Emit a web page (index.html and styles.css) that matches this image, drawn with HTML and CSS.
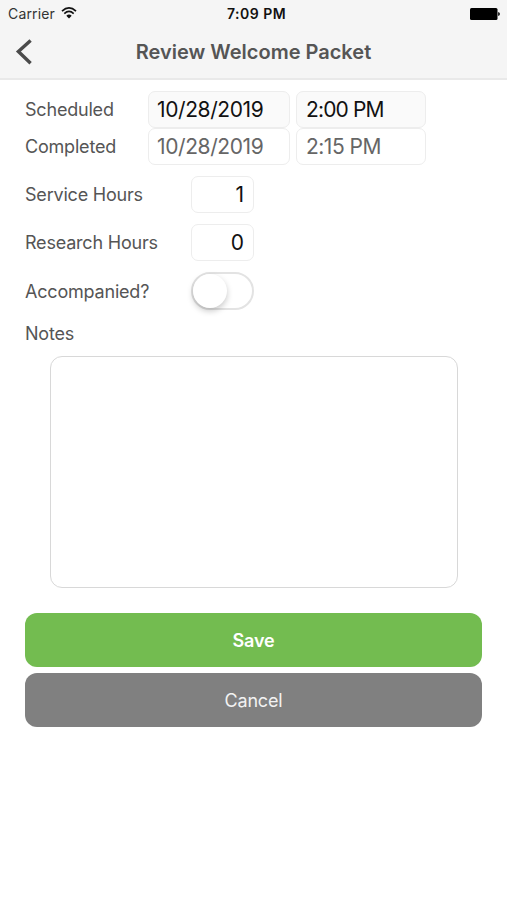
FILE: index.html
```html
<!DOCTYPE html>
<html lang="en">
<head>
<meta charset="utf-8">
<title>Review Welcome Packet</title>
<link rel="stylesheet" href="styles.css">
</head>
<body>
<header class="top">
  <div class="status">
    <div class="carrier"><span>Carrier</span>
      <svg class="wifi" viewBox="0 0 16 12" width="16" height="12" fill="none" stroke="#111" stroke-width="1.7"><path d="M1 4.1Q8-2.2 15 4.1M3.3 6.6Q8 2.3 12.7 6.6"/><path d="M5.3 8.7Q8 6.3 10.7 8.7L8 11.4Z" fill="#111" stroke="none"/></svg>
    </div>
    <span class="clock">7:09 PM</span>
    <svg class="battery" viewBox="0 0 30 12" width="30" height="12"><rect width="27.5" height="12" rx="1.5"/><path d="M28.2 4Q29.9 4.3 29.9 6T28.2 8Z"/></svg>
  </div>
  <nav class="nav">
    <svg class="back" viewBox="0 0 18 26" width="18" height="26" fill="none" stroke="#4b4b4b" stroke-width="3.4"><path d="M15.6 1.5 3.4 12.6 15.6 24.2"/></svg>
    <h1>Review Welcome Packet</h1>
  </nav>
</header>
<main>
  <div class="row date-row"><span class="label">Scheduled</span><span class="field date filled">10/28/2019</span><span class="field time filled">2:00 PM</span></div>
  <div class="row date-row"><span class="label">Completed</span><span class="field date muted">10/28/2019</span><span class="field time time-late muted">2:15 PM</span></div>
  <div class="row hours"><span class="label">Service Hours</span><span class="field number">1</span></div>
  <div class="row hours"><span class="label">Research Hours</span><span class="field number">0</span></div>
  <div class="row accompanied"><span class="label">Accompanied?</span><span class="switch"><span class="knob"></span></span></div>
  <div class="label notes-label">Notes</div>
  <div class="notes"></div>
  <button class="btn save">Save</button>
  <button class="btn cancel">Cancel</button>
</main>
</body>
</html>
```
FILE: styles.css
```css
* { box-sizing: border-box; }
body { margin: 0; height: 900px; overflow: hidden; background: #fff; color: #555; font-family: Inter, "Liberation Sans", sans-serif; }
.top { height: 80px; background: #f5f5f5; border-bottom: 2px solid #e9e9e9; }
.status { height: 27px; display: grid; grid-template-columns: 1fr auto 1fr; align-items: center; padding: 0 7px 0 8px; color: #111; font-size: 14px; }
.carrier { display: flex; align-items: center; gap: 6px; color: #333; letter-spacing: 0.15px; }
.wifi { margin-top: -1px; }
.clock { font-weight: 600; letter-spacing: 0.5px; padding-left: 5px; }
.battery { justify-self: end; fill: #000; }
.nav { height: 50px; display: grid; grid-template-columns: 40px 1fr 40px; align-items: center; }
.back { margin-left: 15px; }
.nav h1 { margin: 0; text-align: center; font-size: 20px; font-weight: 600; color: #555; white-space: nowrap; }
main { padding: 11px 25px 0; display: flex; flex-direction: column; }
.row { display: grid; align-items: center; height: 37px; }
.date-row { grid-template-columns: 117px 142px 130px; column-gap: 6px; }
.label { padding-top: 1px; font-size: 18px; line-height: 24px; letter-spacing: -0.2px; white-space: nowrap; }
.field { height: 37px; line-height: 35px; border: 1px solid #ededed; border-radius: 7px; padding: 0 9px; font-size: 21px; color: #111; white-space: nowrap; }
.filled { background: #fafafa; }
.muted { color: #666; }
.date { letter-spacing: -0.4px; padding-left: 8px; }
.time { letter-spacing: -0.85px; }
.time-late { letter-spacing: -0.5px; }
.hours { grid-template-columns: 166px 63px; margin-top: 11px; }
.number { text-align: right; }
.accompanied { grid-template-columns: 166px 63px; margin-top: 11px; height: 38px; }
.switch { height: 38px; border: 2px solid #e3e3e3; border-radius: 19px; }
.knob { display: block; width: 34px; height: 34px; border-radius: 50%; background: #fff; box-shadow: 0 3px 6px rgba(0,0,0,.22); }
.notes-label { margin-top: 11px; }
.notes { height: 232px; margin: 10px 24px 0 25px; border: 1px solid #d8d8d8; border-radius: 12px; }
.btn { height: 54px; border: 0; border-radius: 12px; padding: 0; color: #fff; font: 400 18px Inter, "Liberation Sans", sans-serif; letter-spacing: -0.2px; }
.save { margin-top: 25px; background: #73bc50; font-weight: 600; }
.cancel { margin-top: 6px; background: #808080; color: #f2f2f2; }
```
